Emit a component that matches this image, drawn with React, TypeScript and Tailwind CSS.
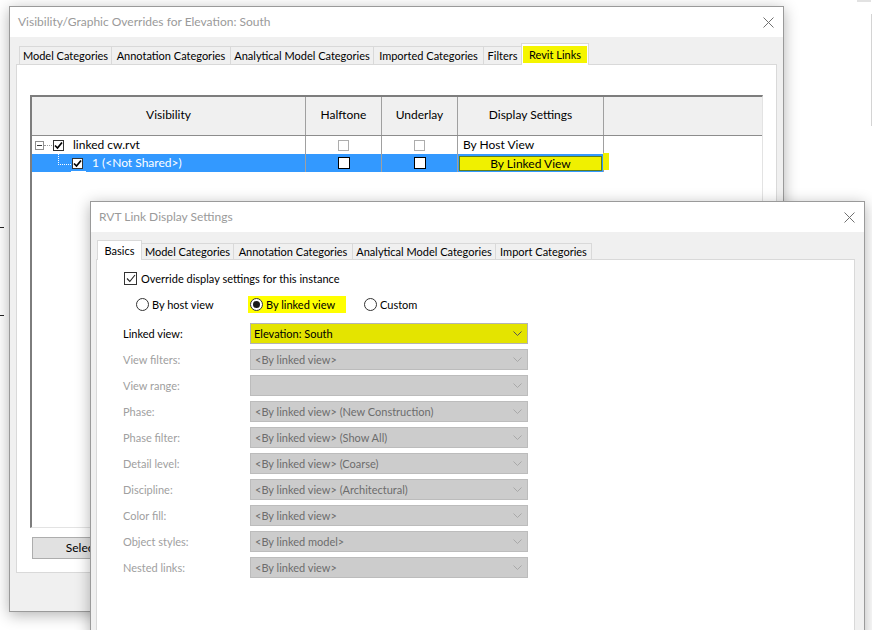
import React from "react";

const VG_TABS = [
  { label: "Model Categories", w: 93 },
  { label: "Annotation Categories", w: 120 },
  { label: "Analytical Model Categories", w: 144 },
  { label: "Imported Categories", w: 111 },
  { label: "Filters", w: 39 },
];

const LINK_TABS = [
  { label: "Model Categories", w: 93 },
  { label: "Annotation Categories", w: 120 },
  { label: "Analytical Model Categories", w: 144 },
  { label: "Import Categories", w: 97 },
];

const FIELDS = [
  { label: "View filters:", value: "<By linked view>" },
  { label: "View range:", value: "" },
  { label: "Phase:", value: "<By linked view> (New Construction)" },
  { label: "Phase filter:", value: "<By linked view> (Show All)" },
  { label: "Detail level:", value: "<By linked view> (Coarse)" },
  { label: "Discipline:", value: "<By linked view> (Architectural)" },
  { label: "Color fill:", value: "<By linked view>" },
  { label: "Object styles:", value: "<By linked model>" },
  { label: "Nested links:", value: "<By linked view>" },
];

function CloseX() {
  return (
    <svg width="11" height="11" viewBox="0 0 11 11" className="shrink-0">
      <path d="M0.5 0.5 L10.5 10.5 M10.5 0.5 L0.5 10.5" stroke="#707070" strokeWidth="1" />
    </svg>
  );
}

function Chevron({ color }: { color: string }) {
  return (
    <svg width="9" height="5" viewBox="0 0 9 5" className="shrink-0">
      <polyline points="0.5,0.5 4.5,4.5 8.5,0.5" fill="none" stroke={color} strokeWidth="1" />
    </svg>
  );
}

function Tick({ stroke = "#000", w = 1.7 }: { stroke?: string; w?: number }) {
  return (
    <svg width="9" height="9" viewBox="0 0 9 9">
      <polyline points="1,4.5 3.5,7 8,1.5" fill="none" stroke={stroke} strokeWidth={w} />
    </svg>
  );
}

function Tab({ label, w, h }: { label: string; w: number; h: string }) {
  return (
    <div
      className={`${h} shrink-0 whitespace-nowrap -mr-px flex items-center justify-center bg-[#f0f0f0] border border-b-0 border-[#d9d9d9]`}
      style={{ width: w }}
    >
      {label}
    </div>
  );
}

function VisibilityDialog() {
  return (
    <div className="absolute left-[9px] top-[6px] w-[775px] h-[606px] flex flex-col border border-[#9a9a9a] bg-[#f0f0f0] shadow-[0_3px_14px_rgba(0,0,0,0.3)]">
      {/* Title bar */}
      <div className="h-[30px] shrink-0 flex items-center justify-between bg-white pl-[8px] pr-[9px]">
        <span className="text-[12px] text-[#9a9a9a]">Visibility/Graphic Overrides for Elevation: South</span>
        <CloseX />
      </div>

      <div className="flex flex-col px-[6px] pt-[6px]">
        {/* Tabs */}
        <div className="flex items-end h-[21px] pl-[3px]">
          {VG_TABS.map((t) => (
            <Tab key={t.label} label={t.label} w={t.w} h="h-[18px]" />
          ))}
          <div className="relative z-10 -mb-px shrink-0 h-[22px] w-[68px] flex flex-col items-center bg-white border border-b-0 border-[#d9d9d9] px-[1px] pt-[2px]">
            <div className="w-full h-[17px] bg-[#f5f500] flex items-center justify-center whitespace-nowrap">Revit Links</div>
          </div>
        </div>

        {/* Panel */}
        <div className="h-[509px] bg-white border border-[#d9d9d9] flex flex-col pl-[13px] pt-[30px]">
          <div className="w-[733px] h-[433px] flex flex-col bg-white border-t-2 border-l-2 border-[#7d7d7d] border-r border-b border-r-[#e3e3e3] border-b-[#e3e3e3]">
            {/* Header */}
            <div className="flex h-[39px] bg-[#f0f0f0] border-b border-[#8c8c8c] text-[12px]">
              <div className="w-[274px] flex items-center justify-center border-r border-[#a0a0a0] pb-[2px]">Visibility</div>
              <div className="w-[76px] flex items-center justify-center border-r border-[#a0a0a0] pb-[2px]">Halftone</div>
              <div className="w-[76px] flex items-center justify-center border-r border-[#a0a0a0] pb-[2px]">Underlay</div>
              <div className="w-[146px] flex items-center justify-center border-r border-[#a0a0a0] pb-[2px]">Display Settings</div>
              <div className="flex-1" />
            </div>

            {/* Row 1 */}
            <div className="flex h-[18px] text-[12px]">
              <div className="w-[274px] flex items-center border-r border-[#a0a0a0] pl-[3px]">
                <div className="w-[9px] h-[9px] border border-[#8e8e8e] flex items-center justify-center">
                  <div className="w-[5px] h-px bg-[#3a3a3a]" />
                </div>
                <div className="w-[8px] border-t border-dotted border-[#9a9a9a]" />
                <div className="ml-[1px] w-[11px] h-[11px] border border-[#333] bg-white flex items-center justify-center">
                  <Tick />
                </div>
                <span className="ml-[9px]">linked cw.rvt</span>
              </div>
              <div className="w-[76px] flex items-center justify-center border-r border-[#a0a0a0]">
                <div className="w-[11px] h-[11px] border border-[#adadad] bg-white" />
              </div>
              <div className="w-[76px] flex items-center justify-center border-r border-[#a0a0a0]">
                <div className="w-[11px] h-[11px] border border-[#adadad] bg-white" />
              </div>
              <div className="w-[146px] flex items-center border-r border-[#a0a0a0] pl-[5px]">By Host View</div>
              <div className="flex-1" />
            </div>

            {/* Row 2 (selected) */}
            <div className="flex h-[18px] text-[12px]">
              <div className="w-[274px] flex items-center bg-[#3399ff] border-r border-[#a0a0a0] text-white">
                <div className="ml-[26px] self-start w-[13px] h-[11px] border-l border-b border-dotted border-white" />
                <div className="relative ml-[1px] w-[11px] h-[11px] border border-[#333] bg-white flex items-center justify-center">
                  <Tick />
                  <div className="absolute left-[-2px] top-[12px] w-[15px] h-px bg-white" />
                </div>
                <span className="ml-[9px]">1 (&lt;Not Shared&gt;)</span>
              </div>
              <div className="w-[76px] flex items-center justify-center bg-[#3399ff] border-r border-[#a0a0a0]">
                <div className="w-[12px] h-[12px] border border-black bg-white" />
              </div>
              <div className="w-[76px] flex items-center justify-center bg-[#3399ff] border-r border-[#a0a0a0]">
                <div className="w-[12px] h-[12px] border border-black bg-white" />
              </div>
              <div className="relative w-[146px] flex items-center bg-[#3399ff] border-r border-[#a0a0a0] px-[1px]">
                <div className="w-full h-[15px] mt-[1px] bg-[#f0f000] border border-[#5e7f1a] flex items-center justify-center">
                  By Linked View
                </div>
                <div className="absolute right-[-6px] top-[-1px] w-[6px] h-[17px] bg-[#f0f000]" />
              </div>
              <div className="flex-1" />
            </div>
          </div>

          <div className="mt-[9px] ml-[2px] w-[116px] h-[22px] bg-[#e1e1e1] border border-[#adadad] flex items-center justify-center text-[12px]">
            Select All
          </div>
        </div>
      </div>
    </div>
  );
}

function Radio({ on }: { on?: boolean }) {
  return (
    <div className="w-[13px] h-[13px] rounded-full border border-[#333] bg-white flex items-center justify-center shrink-0">
      {on && <div className="w-[7px] h-[7px] rounded-full bg-[#1a1a1a]" />}
    </div>
  );
}

function LinkDisplayDialog() {
  return (
    <div className="absolute left-[90px] top-[201px] w-[775px] h-[440px] flex flex-col border border-[#9a9a9a] bg-[#f0f0f0] shadow-[0_3px_14px_rgba(0,0,0,0.3)]">
      {/* Title bar */}
      <div className="h-[30px] shrink-0 flex items-center justify-between bg-white pl-[8px] pr-[9px]">
        <span className="text-[12px] text-[#9a9a9a]">RVT Link Display Settings</span>
        <CloseX />
      </div>

      <div className="flex-1 flex flex-col pl-[5px] pr-[9px] pt-[8px]">
        {/* Tabs */}
        <div className="flex items-end h-[19px] shrink-0 pl-[1px]">
          <div className="relative z-10 -mb-px -mr-px shrink-0 h-[20px] w-[45px] flex items-center justify-center bg-white border border-b-0 border-[#d9d9d9]">
            Basics
          </div>
          {LINK_TABS.map((t) => (
            <Tab key={t.label} label={t.label} w={t.w} h="h-[16px]" />
          ))}
        </div>

        {/* Panel */}
        <div className="flex-1 bg-white border border-[#d9d9d9] flex flex-col pl-[26px] pt-[11px]">
          <div className="flex items-center h-[14px] ml-[1px] gap-[4px]">
            <div className="w-[13px] h-[13px] border border-[#333] bg-white flex items-center justify-center">
              <svg width="10" height="9" viewBox="0 0 10 9">
                <polyline points="1,4.5 3.8,7.5 9,1" fill="none" stroke="#222" strokeWidth="1.1" />
              </svg>
            </div>
            <span>Override display settings for this instance</span>
          </div>

          <div className="flex items-center h-[14px] mt-[12px] ml-[13px]">
            <div className="w-[114px] flex items-center gap-[3px]">
              <Radio />
              <span>By host view</span>
            </div>
            <div className="w-[114px]">
              <div className="-ml-[2px] w-[98px] h-[17px] bg-[#ffff00] pl-[2px] flex items-center gap-[3px]">
                <Radio on />
                <span>By linked view</span>
              </div>
            </div>
            <div className="flex items-center gap-[3px]">
              <Radio />
              <span>Custom</span>
            </div>
          </div>

          <div className="mt-[12px] flex flex-col gap-[5px]">
            <div className="flex items-center h-[21px]">
              <span className="w-[127px]">Linked view:</span>
              <div className="w-[278px] h-[21px] bg-[#e4e400] border border-[#b4b4b4] flex items-center justify-between pl-[3px] pr-[5px]">
                <span>Elevation: South</span>
                <Chevron color="#555" />
              </div>
            </div>
            {FIELDS.map((f) => (
              <div key={f.label} className="flex items-center h-[21px]">
                <span className="w-[127px] text-[#a0a0a0]">{f.label}</span>
                <div className="w-[278px] h-[21px] bg-[#cccccc] border border-[#bcbcbc] flex items-center justify-between pl-[4px] pr-[5px] text-[#6d6d6d]">
                  <span>{f.value}</span>
                  <Chevron color="#a8a8a8" />
                </div>
              </div>
            ))}
          </div>
        </div>
      </div>
    </div>
  );
}

export default function App() {
  return (
    <div className="relative w-[872px] h-[630px] overflow-hidden bg-white text-[11px] leading-none text-black font-['Lato',sans-serif]">
      {/* bits of windows behind */}
      <div className="absolute left-0 top-[227px] w-[4px] h-px bg-[#222]" />
      <div className="absolute left-0 top-[315px] w-[4px] h-px bg-[#222]" />
      <div className="absolute left-[857px] top-0 w-[14px] h-[2px] bg-[#e2e2e2]" />
      <div className="absolute left-[871px] top-[14px] w-px h-[112px] bg-[#d4d4d4]" />

      <VisibilityDialog />
      <LinkDisplayDialog />
    </div>
  );
}
